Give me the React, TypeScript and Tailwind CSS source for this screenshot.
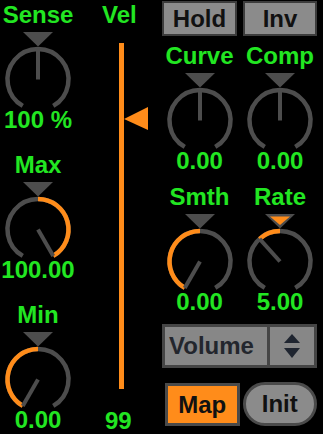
import React from "react";

const GREEN = "#22e622";
const ORANGE = "#ff8c1a";
const GRAY = "#4d4d4d";

const CX = 35;
const CY = 47.5;
const R = 30.5;

function pt(a: number, r: number) {
  const rad = (a * Math.PI) / 180;
  return [CX + r * Math.sin(rad), CY - r * Math.cos(rad)];
}

function arc(a1: number, a2: number) {
  const [x1, y1] = pt(a1, R);
  const [x2, y2] = pt(a2, R);
  const large = a2 - a1 > 180 ? 1 : 0;
  return `M ${x1} ${y1} A ${R} ${R} 0 ${large} 1 ${x2} ${y2}`;
}

type KnobProps = {
  label: string;
  value: string;
  angle: number;
  orange?: [number, number];
  triOrange?: boolean;
};

function Knob({ label, value, angle, orange, triOrange }: KnobProps) {
  const [nx, ny] = pt(angle, 30.5);
  return (
    <div className="flex flex-col items-center">
      <div className="h-[23px] text-[24px] leading-[23px] whitespace-nowrap" style={{ color: GREEN }}>
        {label}
      </div>
      <svg width="70" height="77" viewBox="0 0 70 77" className="mt-[6px] overflow-visible">
        <polygon points="20,0 50,0 35,14.5" fill={GRAY} />
        {triOrange && <polygon points="25,2.5 45,2.5 35,11" fill={ORANGE} />}
        <path d={arc(-150, 150)} stroke={GRAY} strokeWidth="4.5" fill="none" />
        {orange && <path d={arc(orange[0], orange[1])} stroke={ORANGE} strokeWidth="4.5" fill="none" />}
        <line x1={CX} y1={CY} x2={nx} y2={ny} stroke={GRAY} strokeWidth="4" />
      </svg>
      <div className="mt-[-1px] h-[23px] text-[24px] leading-[23px] whitespace-nowrap" style={{ color: GREEN }}>
        {value}
      </div>
    </div>
  );
}

export default function App() {
  const vel = 99;
  const barH = 346;
  const thumbY = barH - (vel / 127) * barH;
  return (
    <div className="w-[323px] h-[434px] bg-black flex overflow-hidden font-['Liberation_Sans',Arial,sans-serif] font-bold">
      {/* left knobs */}
      <div className="w-[76px] flex flex-col pt-[3px] gap-[22px]">
        <Knob label="Sense" value="100 %" angle={0} />
        <Knob label="Max" value="100.00" angle={150} orange={[0, 150]} />
        <Knob label="Min" value="0.00" angle={-150} orange={[-150, 0]} />
      </div>

      {/* velocity */}
      <div className="w-[86px] flex flex-col pt-[3px]">
        <div className="ml-[26px] h-[23px] text-[24px] leading-[23px]" style={{ color: GREEN }}>
          Vel
        </div>
        <div className="relative ml-[43px] mt-[17px] w-[5px] h-[346px]" style={{ backgroundColor: ORANGE }}>
          <svg
            width="25"
            height="24"
            viewBox="0 0 25 24"
            className="absolute left-[5px]"
            style={{ top: thumbY - 12 }}
          >
            <polygon points="0,12 24,0 24,23" fill={ORANGE} />
          </svg>
        </div>
        <div className="ml-[29px] mt-[20px] h-[23px] text-[24px] leading-[23px]" style={{ color: GREEN }}>
          {vel}
        </div>
      </div>

      {/* right side */}
      <div className="w-[155px] flex flex-col">
        <div className="mt-[1px] grid grid-cols-[75px_74px] gap-x-[6px]">
          <div className="h-[35px] border-2 border-[#3c3c3c] bg-[#8b8b8b] flex items-center justify-center text-[24px] text-[#111]">
            Hold
          </div>
          <div className="h-[35px] border-2 border-[#3c3c3c] bg-[#8b8b8b] flex items-center justify-center text-[24px] text-[#111]">
            Inv
          </div>
        </div>
        <div className="mt-[8px] grid grid-cols-[75px_74px] gap-x-[6px]">
          <Knob label="Curve" value="0.00" angle={0} />
          <Knob label="Comp" value="0.00" angle={0} />
        </div>
        <div className="mt-[13px] grid grid-cols-[75px_74px] gap-x-[6px]">
          <Knob label="Smth" value="0.00" angle={-150} orange={[-150, 0]} />
          <Knob label="Rate" value="5.00" angle={-42} orange={[-42, 0]} triOrange />
        </div>
        <div className="mt-[11px] h-[44px] border-[3px] border-[#454545] bg-[#878787] flex">
          <div className="w-[102px] flex items-center pl-[4px] text-[24px] text-[#23262d]">Volume</div>
          <div className="w-[3px] bg-[#454545]" />
          <div className="flex-1 flex flex-col items-center justify-center gap-[5px]">
            <svg width="16" height="9" viewBox="0 0 16 9">
              <polygon points="8,0 16,9 0,9" fill="#1f2530" />
            </svg>
            <svg width="16" height="10" viewBox="0 0 16 10">
              <polygon points="0,0 16,0 8,10" fill="#1f2530" />
            </svg>
          </div>
        </div>
        <div className="mt-[15px] flex gap-[3px]">
          <div className="ml-[3px] w-[75px] h-[43px] border-[3px] border-[#4a4a4a] flex items-center justify-center text-[24px] text-[#111]" style={{ backgroundColor: ORANGE }}>
            Map
          </div>
          <div className="w-[75px] h-[44px] -mt-[1px] rounded-full border-[3px] border-[#4a4a4a] bg-[#8b8b8b] flex items-center justify-center text-[24px] text-[#111]">
            Init
          </div>
        </div>
      </div>
    </div>
  );
}
